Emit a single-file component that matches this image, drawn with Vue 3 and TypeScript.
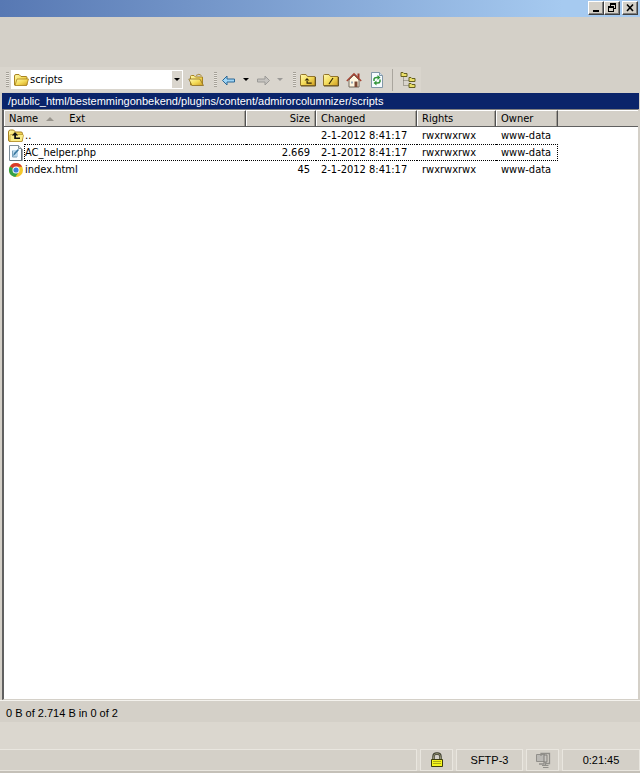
<script setup lang="ts">
import { ref } from 'vue'

interface FileRow {
  name: string
  icon: 'up' | 'php' | 'html'
  size: string
  changed: string
  rights: string
  owner: string
}

const files: FileRow[] = [
  { name: '..', icon: 'up', size: '', changed: '2-1-2012 8:41:17', rights: 'rwxrwxrwx', owner: 'www-data' },
  { name: 'AC_helper.php', icon: 'php', size: '2.669', changed: '2-1-2012 8:41:17', rights: 'rwxrwxrwx', owner: 'www-data' },
  { name: 'index.html', icon: 'html', size: '45', changed: '2-1-2012 8:41:17', rights: 'rwxrwxrwx', owner: 'www-data' },
]

const directory = ref('scripts')
const focused = ref(1)
</script>

<template>
  <div class="window">
    <svg class="defs" aria-hidden="true">
      <defs>
        <linearGradient id="gold" x1="0" y1="0" x2="1" y2="1">
          <stop offset="0" stop-color="#fff9ae" />
          <stop offset="0.5" stop-color="#f4dc5a" />
          <stop offset="1" stop-color="#cf9c1e" />
        </linearGradient>
      </defs>
    </svg>

    <header class="titlebar">
      <div class="caption-pair">
        <button class="caption" aria-label="Minimize">
          <svg viewBox="0 0 12 10" shape-rendering="crispEdges"><path d="M3 7h6v2H3z" /></svg>
        </button>
        <button class="caption" aria-label="Restore">
          <svg viewBox="0 0 12 10" shape-rendering="crispEdges"><path d="M4 0h6v6H8V5h1V2H5v1H4zM2 3h6v6H2zM3 5v3h4V5z" fill-rule="evenodd" /></svg>
        </button>
      </div>
      <button class="caption" aria-label="Close">
        <svg viewBox="0 0 12 10"><path d="M3 1.500l6 6.500M9 1.500l-6 6.500" stroke="#000" stroke-width="1.600" /></svg>
      </button>
    </header>

    <nav class="toolbar">
      <div class="group">
        <i class="grip" />
        <div class="combo">
          <svg class="combo-icon" viewBox="0 0 16 16"><path d="M1.500 13V4q0-1.500 1.500-1.500h3L8 4.500h5q1 0 1 1V13z" fill="url(#gold)" stroke="#a98422" /><path d="M2 13.500L4 7h11.500l-2 6.500z" fill="url(#gold)" stroke="#a98422" stroke-width=".8" /></svg>
          <select v-model="directory" aria-label="Directory">
            <option>scripts</option>
          </select>
          <span class="drop"><i class="caret" /></span>
        </div>
        <button class="tool" aria-label="Open directory">
          <svg viewBox="0 0 16 16"><path d="M2.500 13V4.500q0-1 1-1H6l1.500 1.500H14.500V13z" fill="url(#gold)" stroke="#a98422" /><path d="M4 13.500L.8 7h11l3.700 6.500z" fill="url(#gold)" stroke="#8d702a" stroke-width=".8" /><path d="M8 3.500q3-2.500 5.500 0" fill="none" stroke="#ab8b34" /></svg>
        </button>
      </div>
      <div class="group history">
        <i class="grip" />
        <button class="tool" aria-label="Back">
          <svg viewBox="0 0 16 16"><path d="M1.500 8.500L6 4v3h7.500v3H6v3z" fill="#9ed5f6" stroke="#2a6794" /></svg>
        </button>
        <button class="tool mini" aria-label="Back history"><i class="caret" /></button>
        <button class="tool" aria-label="Forward" disabled>
          <svg viewBox="0 0 16 16"><path d="M14.500 8.500L10 4v3H2.500v3H10v3z" fill="#c5c3bf" stroke="#9b9a97" /></svg>
        </button>
        <button class="tool mini" aria-label="Forward history" disabled><i class="caret pale" /></button>
      </div>
      <div class="group places">
        <i class="grip" />
        <button class="tool" aria-label="Parent directory">
          <svg viewBox="0 0 16 16"><path d="M.5 13.500V3.500q0-1 1-1H6l1.500 2H15v9z" fill="url(#gold)" stroke="#93752b" /><path d="M15.500 5v9H1" fill="none" stroke="#65511f" /><path d="M7 6L4.500 8.500h5zM6.500 8h1.200v2.500h4v1.200H6.500z" fill="#332705" /></svg>
        </button>
        <button class="tool" aria-label="Root directory">
          <svg viewBox="0 0 16 16"><path d="M.5 13.500V3.500q0-1 1-1H6l1.500 2H15v9z" fill="url(#gold)" stroke="#93752b" /><path d="M15.500 5v9H1" fill="none" stroke="#65511f" /><path d="M10 6l-4 6" stroke="#332705" stroke-width="1.200" /></svg>
        </button>
        <button class="tool" aria-label="Home directory">
          <svg viewBox="0 0 16 16"><path d="M11.500 1.500h2v5h-2z" fill="#9c3a28" /><path d="M3 8l5-5 5 5v7H3z" fill="#fff7df" stroke="#73685d" /><path d="M.8 9L8 1.800 15.200 9" fill="none" stroke="#a44332" stroke-width="1.500" /><path d="M8.500 9.500h3V15h-3z" fill="#7a4934" /><path d="M5 9.500h2v2H5z" fill="#9cabb5" /></svg>
        </button>
        <button class="tool" aria-label="Refresh">
          <svg viewBox="0 0 16 16"><path d="M2.500.5h8l3 3v12h-11z" fill="#f6fbff" stroke="#8197a8" /><path d="M10.500.5v3h3" fill="#d6e3ed" stroke="#8197a8" /><path d="M5 9V7q.5-2 4-1.500M11 7.500v2q-.5 2-4 1.500" fill="none" stroke="#32953a" stroke-width="1.500" /><path d="M8.500 3l3 2.500-3 2.500zM7.500 8.500l-3 2.500 3 2.500z" fill="#32953a" /></svg>
        </button>
        <i class="rule" />
        <button class="tool" aria-label="Directory tree">
          <svg viewBox="0 0 16 16"><path d="M3.500 5.500v8h5M3.500 8.500h5" fill="none" stroke="#716c61" stroke-dasharray="1 1" /><path d="M1 .5h2l1 1h3v3H1zM9 5.500h2l1 1h3v3H9zM9 11.500h2l1 1h3v3H9z" fill="#eadf67" stroke="#656021" /></svg>
        </button>
      </div>
    </nav>

    <div class="path">/public_html/bestemmingonbekend/plugins/content/admirorcolumnizer/scripts</div>

    <main class="list">
      <table>
        <colgroup>
          <col class="c-name" /><col class="c-size" /><col class="c-changed" /><col class="c-rights" /><col class="c-owner" /><col />
        </colgroup>
        <thead>
          <tr>
            <th><span class="name-head">Name<i class="sort" /><span>Ext</span></span></th>
            <th class="num">Size</th>
            <th>Changed</th>
            <th>Rights</th>
            <th>Owner</th>
            <td class="filler" />
          </tr>
        </thead>
        <tbody>
          <tr v-for="(file, i) in files" :key="file.name" :class="{ focused: i === focused }" @click="focused = i">
            <td class="name">
              <div class="name-cell">
                <svg v-if="file.icon === 'up'" viewBox="0 0 16 16"><path d="M.5 12V4q0-2 2-2h3l2 2H13q1.500 0 1.500 1.500V12q0 1.500-1.500 1.500H2Q.5 13.500.5 12z" fill="url(#gold)" stroke="#a78020" /><path d="M2 7.500q0-1 1-1h11.500q1 0 1 1L14 13.500H2z" fill="#fbed88" stroke="#b58e2b" stroke-width=".7" /><path d="M7 4L3.800 7.500h2.400V11H12V9.500H8v-2h2.200z" fill="#111" /></svg>
                <svg v-else-if="file.icon === 'php'" viewBox="0 0 16 16"><path d="M1.500.5h9l3 3v12h-12z" fill="#fafdff" stroke="#7f8e9a" /><path d="M14 4v12H2" fill="none" stroke="#4f565c" /><path d="M10.500.5v3h3" fill="#d5dde3" stroke="#7f8e9a" /><path d="M4 5h6v7H4z" fill="#bcd9ec" /><path d="M5 11l1-3 4-4 1 1-4 4.500z" fill="#39789f" /><path d="M4.500 6v6H9" fill="none" stroke="#78a0ba" /></svg>
                <svg v-else viewBox="0 0 16 16"><circle cx="8" cy="8" r="7" fill="#f4c82c" /><path d="M8 8L1.900 4.500A7 7 0 0 1 14.100 4.700H8z" fill="#d93a2c" /><path d="M8 8L1.900 4.500A7 7 0 0 0 7.300 15L11 9.800z" fill="#35a148" /><circle cx="8" cy="8" r="3.500" fill="#fff" /><circle cx="8" cy="8" r="2.600" fill="#3a7fdb" /></svg>
                <span class="label">{{ file.name }}</span>
              </div>
            </td>
            <td class="cell num">{{ file.size }}</td>
            <td class="cell">{{ file.changed }}</td>
            <td class="cell">{{ file.rights }}</td>
            <td class="cell owner">{{ file.owner }}</td>
            <td class="filler" />
          </tr>
        </tbody>
      </table>
    </main>

    <div class="summary">0 B of 2.714 B in 0 of 2</div>

    <footer class="status">
      <div class="panel wide" />
      <div class="panel small">
        <svg viewBox="0 0 16 16" role="img" aria-label="Secure connection"><path d="M4.500 8V4.500q0-3 3.500-3t3.500 3V8" fill="none" stroke="#38382b" stroke-width="2.400" /><path d="M4.500 8V4.500q0-3 3.500-3t3.500 3V8" fill="none" stroke="#b8b88d" stroke-width=".7" /><path d="M2.500 7.500h11v7h-11z" fill="#f5f51d" stroke="#3d3d0b" /><path d="M4 9.500h8M4 11.500h8" stroke="#a9a916" /></svg>
      </div>
      <div class="panel protocol">SFTP-3</div>
      <div class="panel small">
        <svg viewBox="0 0 16 16" role="img" aria-label="Compression off"><path d="M1.500 2.500h8v7h-8z" fill="#bbb9b5" stroke="#918f8a" /><path d="M4 12h5v-2M6 4V1.500h8.500v10H11" fill="none" stroke="#918f8a" stroke-width="1.300" /><path d="M9 3h3v7H9z" fill="#c9c7c2" stroke="#817f7a" /><path d="M10.500 10v3M7 13.500h6.500M8 15.500h5.500" stroke="#918f8a" stroke-width="1.200" /></svg>
      </div>
      <div class="panel time">0:21:45</div>
    </footer>
  </div>
</template>

<style>
body {
  margin: 0;
  background: #d4d0c8;
}
</style>

<style scoped>
* {
  box-sizing: border-box;
}
.window {
  display: flex;
  flex-direction: column;
  min-height: 100vh;
  background: #d4d0c8;
  color: #000;
  font-family: "DejaVu Sans Condensed", "DejaVu Sans", sans-serif;
  font-size: 11px;
  line-height: 15px;
}
.defs {
  position: absolute;
  width: 0;
  height: 0;
}
button {
  padding: 0;
  border: 0;
  background: none;
}
.titlebar {
  display: flex;
  justify-content: flex-end;
  gap: 2px;
  height: 17px;
  padding: 1px 2px 2px 0;
  background: linear-gradient(90deg, #5778b3, #a6caf0 88%);
}
.caption-pair {
  display: flex;
}
.caption {
  display: flex;
  width: 16px;
  height: 14px;
  padding: 1px;
  background: #d4d0c8;
  border: 1px solid;
  border-color: #fff #404040 #404040 #fff;
  box-shadow: inset -1px -1px #808080;
}
.caption svg {
  width: 12px;
  height: 10px;
}
.toolbar {
  display: flex;
  align-items: center;
  align-self: flex-start;
  gap: 7px;
  height: 25px;
  margin: 50px 0 1px;
  padding: 0 5px 0 6px;
  background: #d9d5cd;
}
.group {
  display: flex;
  align-items: center;
  gap: 2px;
}
.grip {
  width: 3px;
  height: 15px;
  background: repeating-linear-gradient(#a5a198 0 1px, #e9e6df 1px 2px);
}
.combo {
  display: flex;
  align-items: center;
  width: 172px;
  height: 19px;
  margin-right: 3px;
  padding: 0 1px 0 2px;
  background: #fff;
}
.combo:focus-within {
  outline: 1px dotted #0a246a;
}
.combo-icon {
  width: 16px;
  height: 16px;
}
.combo select {
  flex: 1;
  min-width: 0;
  padding: 0 1px;
  border: 0;
  outline: 0;
  appearance: none;
  background: none;
  color: inherit;
  font: inherit;
}
.drop {
  display: flex;
  align-items: center;
  justify-content: center;
  width: 10px;
  height: 17px;
  background: #d9d5cd;
}
.caret {
  border: 3px solid transparent;
  border-top-color: #000;
  border-bottom: 0;
}
.caret.pale {
  border-top-color: #9b9a97;
}
.tool {
  display: flex;
  align-items: center;
  justify-content: center;
  width: 16px;
  height: 20px;
}
.tool svg {
  width: 16px;
  height: 16px;
}
.tool.mini {
  width: 12px;
}
.history {
  gap: 3px;
  padding-left: 3px;
}
.history .grip {
  margin-right: 1px;
}
.places {
  gap: 7px;
}
.places .grip {
  margin-right: -3px;
}
.rule {
  width: 1px;
  height: 22px;
  background: #aaa69e;
}
.path {
  height: 16px;
  margin: 0 1px 0 2px;
  padding: 0 6px;
  background: #0a246a;
  color: #fff;
  font-family: "Liberation Sans", Arial, sans-serif;
  line-height: 16px;
  white-space: nowrap;
}
.list {
  flex: 1;
  margin: 0 1px 0 2px;
  background: #fff;
  border: 1px solid #d4d0c8;
  border-top-color: #808080;
  border-left: 2px solid #606060;
}
table {
  width: 100%;
  table-layout: fixed;
  border-collapse: separate;
  border-spacing: 0;
}
.c-name { width: 242px; }
.c-size { width: 70px; }
.c-changed { width: 101px; }
.c-rights { width: 79px; }
.c-owner { width: 62px; }
th,
td {
  height: 17px;
  padding: 0 5px;
  font-weight: 400;
  line-height: 15px;
  text-align: left;
  white-space: nowrap;
}
thead th,
thead td {
  background: #d4d0c8;
  border-top: 1px solid #fff;
  border-bottom: 1px solid #606060;
}
thead th {
  border-right: 1px solid #505050;
  box-shadow: inset 1px 0 #fff, inset -1px 0 #a09c94;
}
.num {
  text-align: right;
}
td.num {
  padding-right: 6px;
}
.name-head {
  display: flex;
  align-items: center;
}
.sort {
  margin: 0 15px 0 8px;
  border: 4px solid transparent;
  border-top: 0;
  border-bottom-color: #99958d;
}
td.name {
  padding: 0 0 0 4px;
}
.name-cell {
  display: flex;
  align-items: center;
}
.name-cell svg {
  width: 16px;
  height: 16px;
}
.label {
  flex: 1;
  height: 17px;
  border: 1px solid transparent;
  border-right: 0;
}
.cell {
  border: 1px solid transparent;
  border-width: 1px 0;
}
.cell.owner {
  padding-right: 0;
  border-right-width: 1px;
}
.focused .label,
.focused .cell {
  border-color: #000;
  border-style: dotted;
}
.summary,
.status {
  font-family: "Liberation Sans", Arial, sans-serif;
}
.summary {
  height: 22px;
  padding: 5px 6px 0;
  border-top: 1px solid #f4f2ed;
}
.status {
  display: flex;
  gap: 3px;
  height: 51px;
  padding-top: 27px;
  background: #dbd7cf;
  border-bottom: 2px solid #c4c0b8;
}
.panel {
  display: flex;
  align-items: center;
  justify-content: center;
  background: #d4d0c8;
  border: 1px solid #e9e6df;
}
.panel svg {
  width: 16px;
  height: 16px;
}
.wide {
  flex: 1;
  border-left: 0;
}
.small { width: 33px; }
.protocol { width: 67px; }
.time { width: 78px; }
</style>
